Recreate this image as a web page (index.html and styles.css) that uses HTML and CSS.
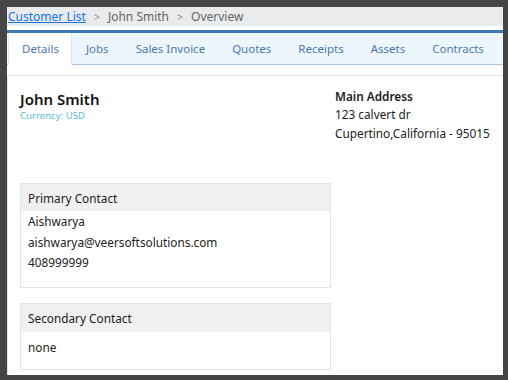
FILE: index.html
```html
<!DOCTYPE html>
<html>
<head>
    <meta charset="UTF-8">
    <title>Customer Overview</title>
    <link rel="stylesheet" href="styles.css">
</head>
<body>
<div class="window">
    <div class="crumbs">
        <a href="#">Customer List</a>
        <span class="sep">&gt;</span>
        <span>John Smith</span>
        <span class="sep">&gt;</span>
        <span>Overview</span>
    </div>

    <ul class="tabs">
        <li class="tab active">Details</li>
        <li class="tab">Jobs</li>
        <li class="tab">Sales Invoice</li>
        <li class="tab">Quotes</li>
        <li class="tab">Receipts</li>
        <li class="tab">Assets</li>
        <li class="tab">Contracts</li>
    </ul>

    <div class="panel">
        <div class="summary">
            <div class="who">
                <h1>John Smith</h1>
                <div class="currency">Currency: USD</div>
            </div>
            <div class="address">
                <div class="label">Main Address</div>
                <div>123 calvert dr</div>
                <div>Cupertino,California - 95015</div>
            </div>
        </div>

        <div class="card primary">
            <div class="card-head">Primary Contact</div>
            <div class="card-body">
                <div>Aishwarya</div>
                <div>aishwarya@veersoftsolutions.com</div>
                <div>408999999</div>
            </div>
        </div>

        <div class="card secondary">
            <div class="card-head">Secondary Contact</div>
            <div class="card-body">
                <div>none</div>
            </div>
        </div>
    </div>
</div>
</body>
</html>
```

FILE: styles.css
```css
html, body {
    margin: 0;
    height: 100%;
}

body {
    background: #454545;
    font-family: "Noto Sans", "Open Sans", sans-serif;
    font-size: 11.8px;
    color: #222;
    overflow: hidden;
}

.window {
    margin: 7px 5px 0 7px;
    height: 368px;
    background: #fff;
    overflow: hidden;
}

.crumbs {
    display: flex;
    align-items: center;
    height: 19px;
    background: #e9ebed;
    color: #666;
    font-size: 12px;
    white-space: nowrap;
}
.crumbs a {
    color: #1a73e8;
    text-decoration: underline;
    margin-left: 1px;
}
.crumbs .sep {
    margin: 0 8px;
    color: #888;
    font-size: 10.5px;
}

.tabs {
    display: flex;
    margin: 4px 0 0 0;
    padding: 0;
    list-style: none;
    height: 31px;
    background: #eef6fd;
    border-top: 3px solid #3f79b5;
    border-bottom: 1px solid #a7c6e6;
    white-space: nowrap;
}
.tab {
    padding: 0 13px 0 14px;
    line-height: 32px;
    color: #4b78b0;
    font-size: 11.5px;
}
.tab.active {
    margin-left: 1px;
    padding: 0 12px 0 13px;
    background: #fff;
    height: 32px;
    border-left: 1px solid #e3e8ee;
    border-right: 1px solid #dce6f0;
}

.panel {
    margin-top: 10px;
    border-top: 1px solid #e4e4e4;
    border-left: 1px solid #e4e4e4;
    padding: 0 0 0 12px;
    height: 300px;
}

.summary {
    display: flex;
    padding-top: 14px;
    height: 92px;
}
.who {
    width: 315px;
}
.who h1 {
    margin: 0;
    font-size: 15px;
    font-weight: 600;
    color: #111;
    line-height: 19px;
}
.currency {
    color: #5bbcd6;
    font-size: 9.6px;
    line-height: 14px;
}
.address {
    line-height: 19px;
}
.address .label {
    font-weight: 600;
    line-height: 13px;
    margin-bottom: 2px;
}

.card {
    width: 309px;
    border: 1px solid #e3e3e3;
}
.card-head {
    background: #f0f0f0;
    height: 27px;
    line-height: 28px;
    padding-left: 7px;
}
.card-body {
    padding: 0 7px 14px 7px;
    line-height: 20.5px;
}

.primary {
    margin-top: 1px;
}
.secondary {
    margin-top: 15px;
}
.secondary .card-head {
    height: 28px;
}
.secondary .card-body {
    padding: 5px 7px 12px 7px;
}
```
